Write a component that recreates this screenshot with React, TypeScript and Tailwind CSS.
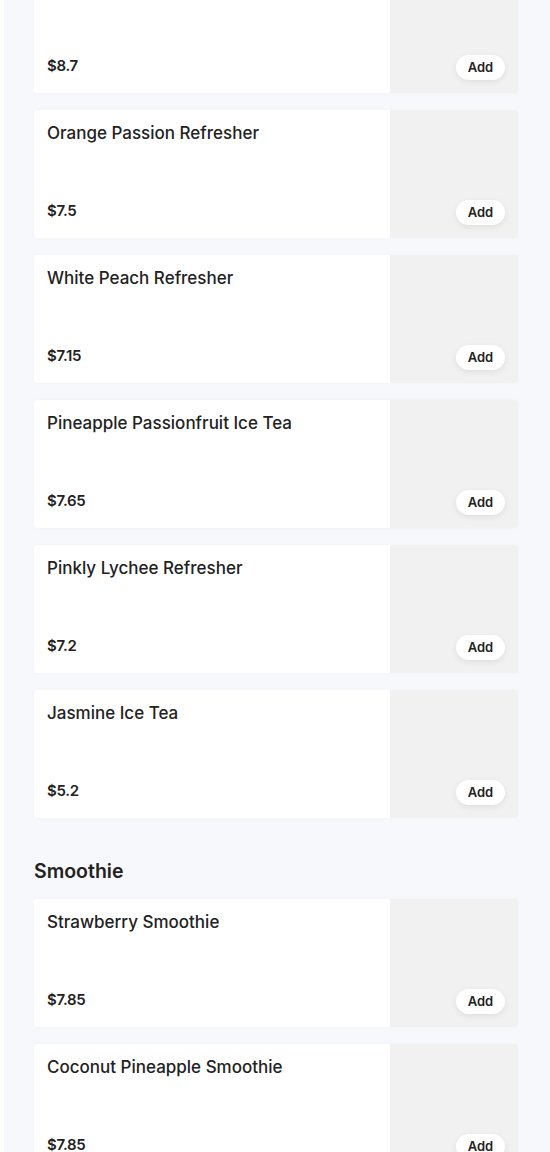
import React from "react";

interface Item {
  name: string;
  price: string;
}

const drinks: Item[] = [
  { name: "", price: "$8.7" },
  { name: "Orange Passion Refresher", price: "$7.5" },
  { name: "White Peach Refresher", price: "$7.15" },
  { name: "Pineapple Passionfruit Ice Tea", price: "$7.65" },
  { name: "Pinkly Lychee Refresher", price: "$7.2" },
  { name: "Jasmine Ice Tea", price: "$5.2" },
];

const smoothies: Item[] = [
  { name: "Strawberry Smoothie", price: "$7.85" },
  { name: "Coconut Pineapple Smoothie", price: "$7.85" },
];

function MenuCard({ item }: { item: Item }) {
  return (
    <div className="flex h-[128px] shrink-0 overflow-hidden rounded-[3px] bg-white shadow-[0_0_3px_rgba(0,0,0,0.03)]">
      {/* text side */}
      <div className="flex flex-1 flex-col justify-between px-[13px] pt-[11px] pb-[16px]">
        <div className="text-[17px] leading-[24px] font-medium text-[#222]">
          {item.name}
        </div>
        <div className="text-[15px] leading-[22px] font-semibold tracking-[-0.3px] text-[#222]">
          {item.price}
        </div>
      </div>
      {/* image placeholder */}
      <div className="flex w-[128px] items-end justify-end bg-[#f1f1f1] pr-[13px] pb-[13px]">
        <button className="h-[25px] w-[49px] rounded-full bg-white text-[13px] font-semibold text-[#222] shadow-[0_2px_6px_rgba(0,0,0,0.08)]">
          Add
        </button>
      </div>
    </div>
  );
}

export default function App() {
  return (
    <div
      className="h-[1152px] overflow-hidden bg-white pl-[4px]"
      style={{ fontFamily: "Inter, 'Noto Sans', sans-serif" }}
    >
      <div className="flow-root h-full bg-[#f7f8fb] pl-[30px] pr-[32px]">
        <div className="-mt-[35px] flex flex-col gap-[17px]">
          {drinks.map((d, i) => (
            <MenuCard key={i} item={d} />
          ))}
        </div>

        {/* Smoothie section */}
        <h2 className="mt-[39px] mb-[14px] text-[19.5px] leading-[28px] font-semibold text-[#222]">
          Smoothie
        </h2>
        <div className="flex flex-col gap-[17px]">
          {smoothies.map((d, i) => (
            <MenuCard key={i} item={d} />
          ))}
        </div>
      </div>
    </div>
  );
}
